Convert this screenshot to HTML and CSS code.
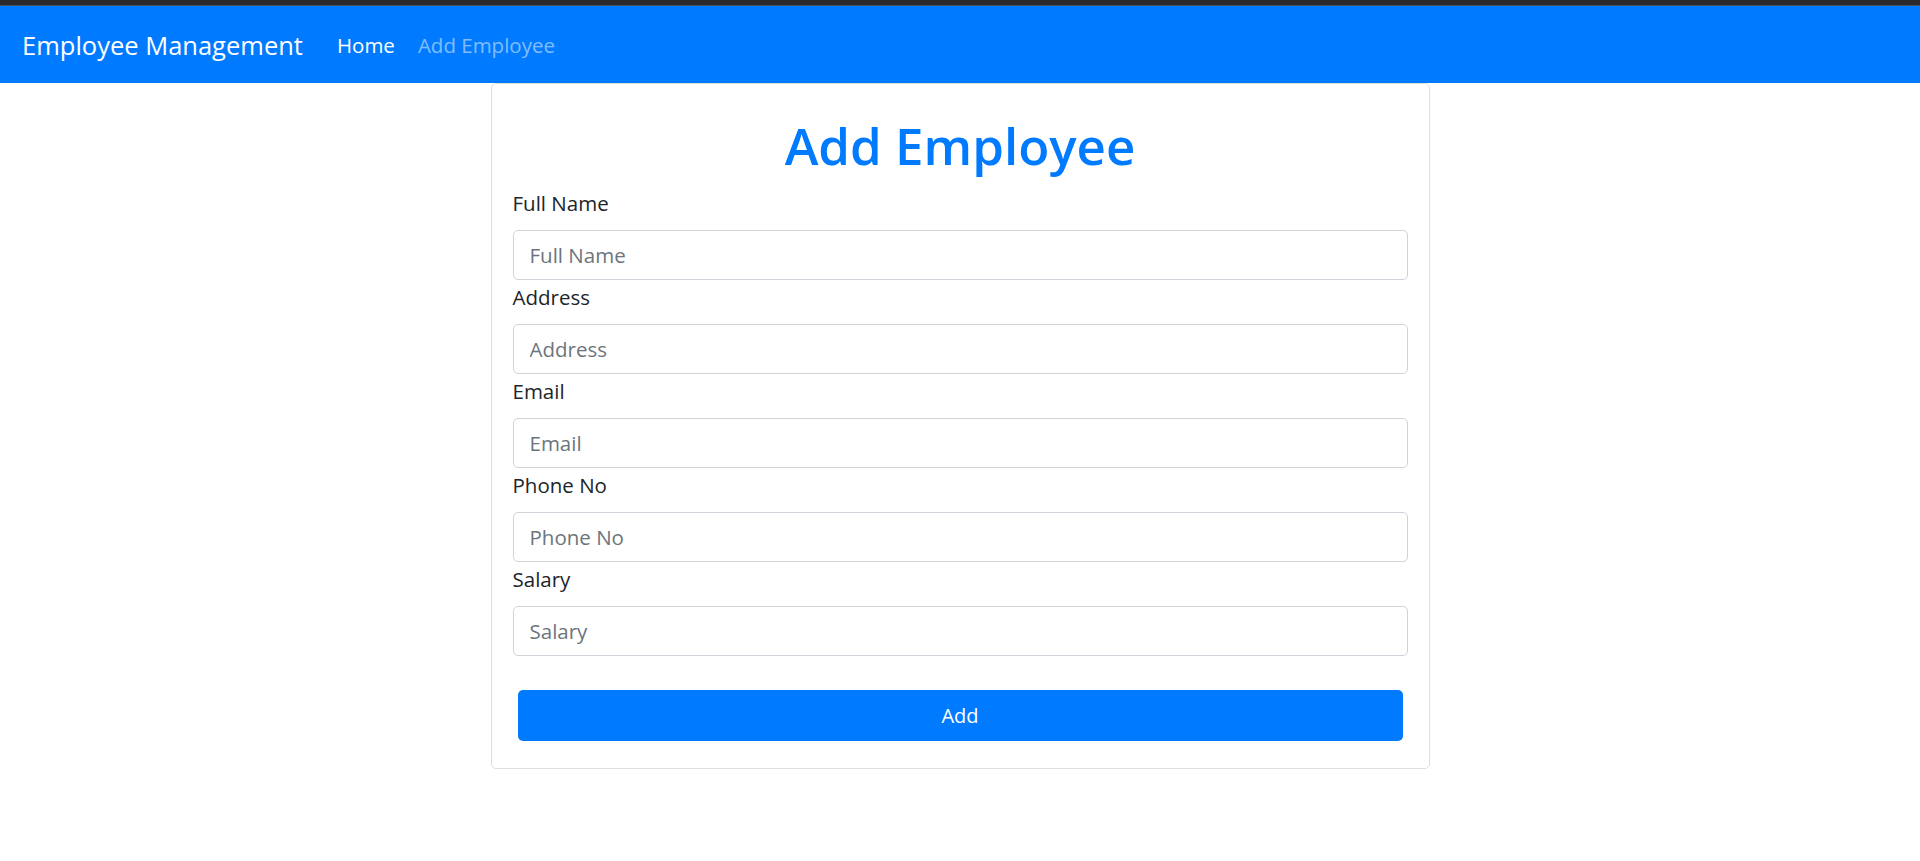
FILE: index.html
```html
<!DOCTYPE html>
<html lang="en">
<head>
<meta charset="utf-8">
<title>Employee Management</title>
<link rel="stylesheet" href="styles.css">
</head>
<body>
<div class="topbar"></div>
<nav class="navbar">
  <a class="brand" href="#">Employee Management</a>
  <ul class="nav">
    <li><a class="nav-link active" href="#">Home</a></li>
    <li><a class="nav-link" href="#">Add Employee</a></li>
  </ul>
</nav>
<main class="page">
  <div class="card">
    <h1 class="title">Add Employee</h1>
    <form class="form">
      <div class="group">
        <label class="label" for="name">Full Name</label>
        <input class="input" id="name" type="text" placeholder="Full Name">
      </div>
      <div class="group">
        <label class="label" for="address">Address</label>
        <input class="input" id="address" type="text" placeholder="Address">
      </div>
      <div class="group">
        <label class="label" for="email">Email</label>
        <input class="input" id="email" type="text" placeholder="Email">
      </div>
      <div class="group">
        <label class="label" for="phone">Phone No</label>
        <input class="input" id="phone" type="text" placeholder="Phone No">
      </div>
      <div class="group">
        <label class="label" for="salary">Salary</label>
        <input class="input" id="salary" type="text" placeholder="Salary">
      </div>
      <div class="actions">
        <button class="btn" type="button">Add</button>
      </div>
    </form>
  </div>
</main>
</body>
</html>
```

FILE: styles.css
```css
* { box-sizing: border-box; }

html, body {
  margin: 0;
  padding: 0;
  background: #ffffff;
  font-family: "Open Sans", "Noto Sans", "Liberation Sans", sans-serif;
  color: #212529;
}

.topbar {
  height: 6px;
  background: #2c292d;
  border-bottom: 1px solid #4b5560;
}

.navbar {
  height: 77px;
  background: #007bff;
  display: flex;
  align-items: center;
  padding: 3px 22px 0;
}

.brand {
  color: #ffffff;
  text-decoration: none;
  font-size: 25.5px;
  line-height: 1;
  margin-right: 34px;
}

.nav {
  list-style: none;
  margin: 0;
  padding: 0;
  display: flex;
  gap: 23px;
}

.nav-link {
  color: rgba(255, 255, 255, 0.5);
  text-decoration: none;
  font-size: 20.5px;
  line-height: 1;
}

.nav-link.active { color: #ffffff; }

.page {
  display: flex;
  justify-content: center;
}

.card {
  width: 939px;
  border: 1px solid rgba(0, 0, 0, 0.13);
  border-radius: 5px;
  padding: 20px 21px 27px;
}

.title {
  margin: 11px 0 13px;
  text-align: center;
  color: #007bff;
  font-size: 51px;
  font-weight: 600;
  line-height: 60px;
}

.group {
  display: flex;
  flex-direction: column;
  margin-bottom: 2px;
}

.label {
  font-size: 20.5px;
  line-height: 30px;
  margin-bottom: 12px;
}

.input {
  height: 50px;
  border: 1px solid #ced4da;
  border-radius: 5px;
  padding: 0 16px;
  font-family: inherit;
  font-size: 20.5px;
  color: #495057;
  background: #ffffff;
}

.input::placeholder { color: #6c757d; }

.actions {
  padding: 32px 5px 0;
}

.btn {
  display: block;
  width: 100%;
  height: 51px;
  border: none;
  border-radius: 5px;
  background: #007bff;
  color: #ffffff;
  font-family: inherit;
  font-size: 20px;
}
```
